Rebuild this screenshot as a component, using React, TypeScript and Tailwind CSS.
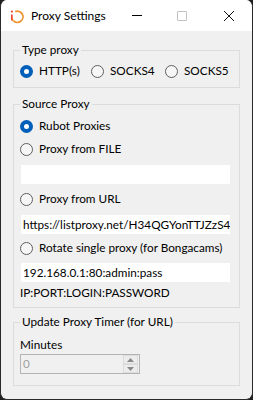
import React from "react";

const font = { fontFamily: "Lato, 'Liberation Sans', sans-serif" };

function Radio({ checked, label, className = "" }: { checked?: boolean; label: string; className?: string }) {
  return (
    <div className={`flex items-center h-[14px] ${className}`}>
      {checked ? (
        <div className="w-[13px] h-[13px] rounded-full bg-[#005fb8] flex items-center justify-center shrink-0">
          <div className="w-[5px] h-[5px] rounded-full bg-white" />
        </div>
      ) : (
        <div className="w-[13px] h-[13px] rounded-full border border-[#5f5f5f] bg-[#f6f6f6] shrink-0" />
      )}
      <span className="ml-[6px] text-[11.75px] leading-[14px] text-black whitespace-nowrap">{label}</span>
    </div>
  );
}

function Group({ title, className = "", children }: { title: string; className?: string; children: React.ReactNode }) {
  return (
    <fieldset className={`border border-[#dcdcdc] px-[6px] w-[227px] ${className}`}>
      <legend className="px-[2px] text-[11.75px] leading-[14px] text-black">{title}</legend>
      {children}
    </fieldset>
  );
}

function TextBox({ value, className = "" }: { value: string; className?: string }) {
  return (
    <div className={`ml-[1px] w-[209px] h-[19px] bg-white overflow-hidden flex items-center pl-[2px] text-[11.75px] leading-[14px] text-black whitespace-nowrap ${className}`}>
      {value}
    </div>
  );
}

export default function App() {
  return (
    <div className="w-[253px] h-[400px] bg-[#1f1f1f]" style={font}>
      <div className="w-full h-full rounded-[7px] overflow-hidden border-x border-b border-[#2a2a2a] bg-[#f0f0f0] flex flex-col">
        {/* title bar */}
        <div className="h-[31px] bg-white flex items-center shrink-0">
          <svg width="16" height="16" viewBox="0 0 16 16" className="ml-[8px]">
            <path d="M6.2 3.6 A5.6 5.6 0 1 1 4.3 12.6" fill="none" stroke="#f0922e" strokeWidth="1.7" />
            <path d="M4.3 12.6 A5.6 5.6 0 0 1 3.3 11" fill="none" stroke="#f5b43a" strokeWidth="1.7" />
            <rect x="2" y="6.5" width="1.7" height="6" fill="#e8452c" />
            <circle cx="2.85" cy="3.6" r="1.1" fill="#e8452c" />
          </svg>
          <span className="ml-[6px] text-[12px] text-black">Proxy Settings</span>
          <div className="ml-auto flex items-center">
            <div className="w-[10px] h-px bg-black mr-[35px]" />
            <div className="w-[10px] h-[10px] border border-[#c4c4c4] rounded-[1px] mr-[36px]" />
            <svg width="12" height="12" viewBox="0 0 12 12" className="mr-[17px]">
              <path d="M1 1 L11 11 M11 1 L1 11" stroke="#111" strokeWidth="1" />
            </svg>
          </div>
        </div>
        {/* body */}
        <div className="pl-[12px] flex flex-col">
          <Group title="Type proxy" className="mt-[12px] pb-[9px]">
            <div className="flex mt-[7px]">
              <Radio checked label="HTTP(s)" className="w-[71px]" />
              <Radio label="SOCKS4" className="w-[74px]" />
              <Radio label="SOCKS5" />
            </div>
          </Group>
          <Group title="Source Proxy" className="mt-[9px] pb-[7px]">
            <Radio checked label="Rubot Proxies" className="mt-[8px]" />
            <Radio label="Proxy from FILE" className="mt-[9px]" />
            <TextBox value="" className="mt-[9px]" />
            <Radio label="Proxy from URL" className="mt-[8px]" />
            <TextBox value="https://listproxy.net/H34QGYonTTJZzS4Gy" className="mt-[9px]" />
            <Radio label="Rotate single proxy (for Bongacams)" className="mt-[7px]" />
            <TextBox value="192.168.0.1:80:admin:pass" className="mt-[8px]" />
            <div className="mt-[4px] text-[11.75px] leading-[14px] text-black">IP:PORT:LOGIN:PASSWORD</div>
          </Group>
          <Group title="Update Proxy Timer (for URL)" className="mt-[7px] pb-[11px]">
            <div className="mt-[9px] text-[11.75px] leading-[14px] text-black">Minutes</div>
            <div className="mt-[2px] w-[120px] h-[20px] border border-[#b4b4b4] bg-[#f0f0f0] flex items-center">
              <span className="pl-[2px] text-[11.75px] leading-[14px] text-[#a0a0a0] flex-1">0</span>
              <div className="w-[15px] h-[18px] mr-[1px] flex flex-col">
                <div className="h-[9px] border border-[#dcdcdc] bg-[#ececec] flex items-center justify-center">
                  <svg width="7" height="4" viewBox="0 0 7 4"><path d="M0 4 L3.5 0 L7 4 Z" fill="#8a8a8a" /></svg>
                </div>
                <div className="h-[9px] border border-[#dcdcdc] bg-[#ececec] flex items-center justify-center">
                  <svg width="7" height="4" viewBox="0 0 7 4"><path d="M0 0 L3.5 4 L7 0 Z" fill="#8a8a8a" /></svg>
                </div>
              </div>
            </div>
          </Group>
        </div>
      </div>
    </div>
  );
}
